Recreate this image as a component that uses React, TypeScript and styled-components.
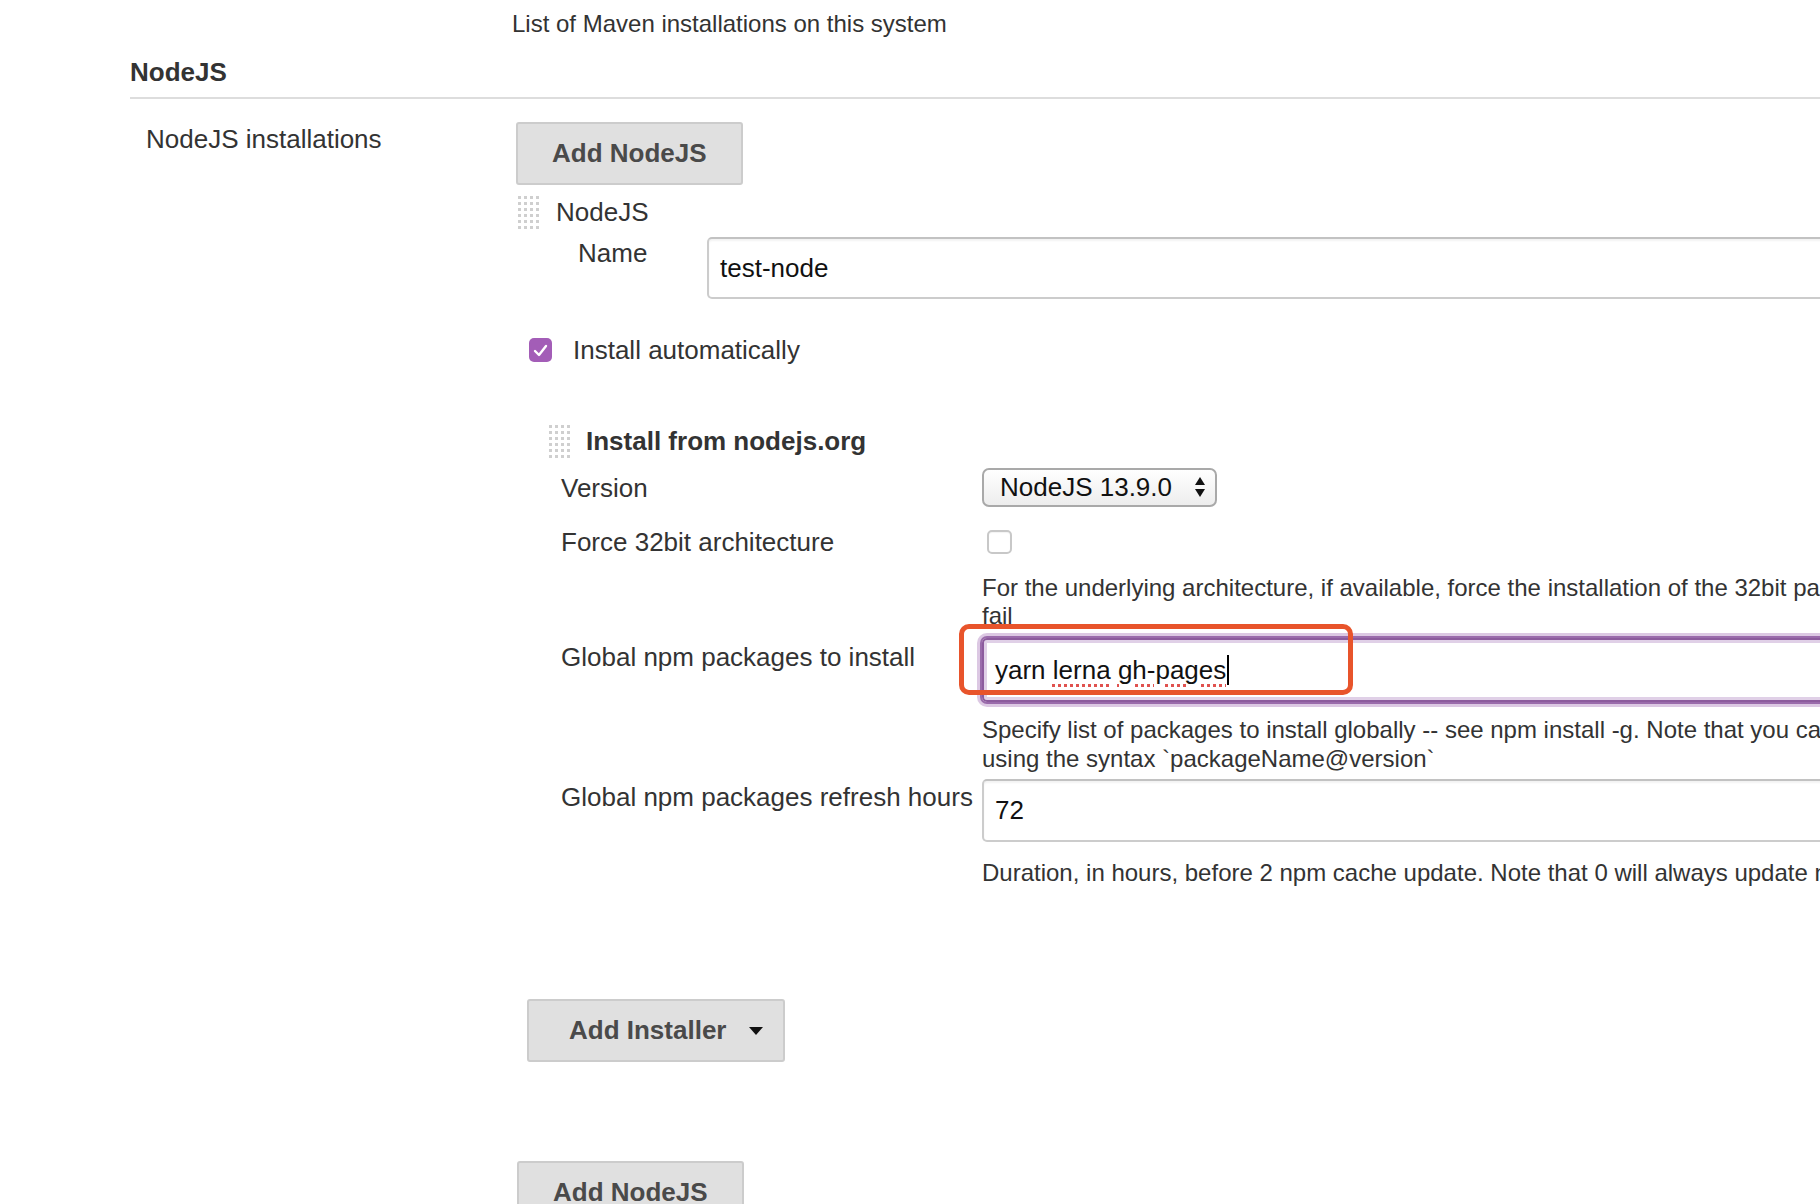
import React from 'react';
import styled, { createGlobalStyle, css } from 'styled-components';

const GlobalStyle = createGlobalStyle`
  html, body {
    margin: 0;
    padding: 0;
    background: #fff;
    overflow: hidden;
  }
  body {
    font-family: "Liberation Sans", Arial, Helvetica, sans-serif;
    font-size: 26px;
    color: #333;
  }
  #root {
    width: 1820px;
    height: 1204px;
    overflow: hidden;
  }
`;

const Page = styled.div`
  padding-left: 130px;
`;

const TopHelp = styled.div`
  padding: 9px 0 0 382px;
  font-size: 24px;
  line-height: 30px;
`;

const SectionHeader = styled.div`
  margin-top: 18px;
  padding-bottom: 10px;
  border-bottom: 2px solid #ddd;
  font-weight: bold;
  line-height: 30px;
`;

const EntryRow = styled.div`
  display: grid;
  grid-template-columns: 386px 1fr;
  padding-top: 23px;
`;

const EntryLabel = styled.div`
  padding: 2px 0 0 16px;
  line-height: 30px;
`;

const Content = styled.div`
  min-width: 0;
`;

const Button = styled.button<{ $offset?: number; $left?: number; $right?: number; $top?: number; $gap?: number }>`
  display: inline-flex;
  align-items: center;
  gap: ${(p) => p.$gap ?? 0}px;
  box-sizing: border-box;
  height: 63px;
  margin: ${(p) => p.$top ?? 0}px 0 0 ${(p) => p.$offset ?? 0}px;
  padding: 0 ${(p) => p.$right ?? 34}px 0 ${(p) => p.$left ?? 34}px;
  background: #e0e0e0;
  border: 2px solid #ccc;
  border-radius: 3px;
  font: bold 26px "Liberation Sans", Arial, sans-serif;
  color: #4a4a4a;
`;

const Chunk = styled.div<{ $top: number }>`
  margin-top: ${(p) => p.$top}px;
`;

const ChunkHead = styled.div<{ $indent: number; $gap: number; $bold?: boolean }>`
  display: flex;
  align-items: center;
  gap: ${(p) => p.$gap}px;
  height: 35px;
  padding-left: ${(p) => p.$indent}px;
  font-weight: ${(p) => (p.$bold ? 'bold' : 'normal')};
`;

const NameRow = styled.div`
  display: flex;
  align-items: flex-start;
  margin-top: 7px;
  padding-left: 62px;
`;

const NameLabel = styled.div`
  width: 129px;
  flex: none;
  padding-top: 1px;
  line-height: 30px;
`;

const Field = styled.div<{ $focused?: boolean; $height?: number }>`
  box-sizing: border-box;
  flex: none;
  width: 1300px;
  height: ${(p) => p.$height ?? 63}px;
  display: flex;
  align-items: center;
  padding: 0 11px;
  border: 2px solid #ccc;
  border-top-color: #c2c2c2;
  border-radius: 5px;
  box-shadow: inset 0 2px 2px rgba(0, 0, 0, 0.05);
  color: #111;
  white-space: pre;
  ${(p) =>
    p.$focused &&
    css`
      border-color: #8c5b9d;
      box-shadow: inset 0 0 0 3px rgba(165, 120, 185, 0.35), 0 0 0 2px #9a6bab,
        0 0 0 5px rgba(185, 145, 200, 0.5);
    `}
`;

const Misspelled = styled.span`
  text-decoration: underline dotted #e0524f;
  text-decoration-thickness: 3px;
  text-underline-offset: 5px;
`;

const Caret = styled.span`
  display: inline-block;
  vertical-align: middle;
  width: 2px;
  height: 30px;
  background: #000;
  margin-left: 1px;
`;

const CheckRow = styled.div`
  display: flex;
  align-items: center;
  gap: 21px;
  margin-top: 36px;
  padding-left: 13px;
  line-height: 30px;
`;

const CheckBox = styled.span<{ $checked?: boolean }>`
  box-sizing: border-box;
  display: inline-flex;
  align-items: center;
  justify-content: center;
  flex: none;
  width: ${(p) => (p.$checked ? 23 : 25)}px;
  height: 24px;
  border-radius: 5px;
  ${(p) =>
    p.$checked
      ? css`
          background: #a35db7;
        `
      : css`
          margin-left: 5px;
          background: #fff;
          border: 2px solid #c8c8c8;
          box-shadow: inset 0 1px 1px rgba(0, 0, 0, 0.05);
        `}
`;

const FieldRow = styled.div<{ $top: number; $center?: boolean }>`
  display: flex;
  align-items: ${(p) => (p.$center ? 'center' : 'flex-start')};
  margin-top: ${(p) => p.$top}px;
  padding-left: 45px;
`;

const FieldLabel = styled.div<{ $pad?: number }>`
  width: 421px;
  flex: none;
  padding-top: ${(p) => p.$pad ?? 0}px;
  line-height: 30px;
  white-space: nowrap;
`;

const Help = styled.div<{ $top: number; $lh: number }>`
  margin: ${(p) => p.$top}px 0 0 466px;
  font-size: 24px;
  line-height: ${(p) => p.$lh}px;
  white-space: nowrap;
`;

const SelectBox = styled.div`
  position: relative;
  box-sizing: border-box;
  width: 235px;
  height: 39px;
  display: flex;
  align-items: center;
  padding-left: 16px;
  border: 2px solid #a9a9a9;
  border-radius: 7px;
  background: linear-gradient(#ffffff, #ededed);
  color: #111;
`;

const SelectArrows = styled.svg`
  position: absolute;
  right: 10px;
  top: 7px;
`;

const Annotated = styled.div`
  position: relative;
  flex: none;
`;

const RedMark = styled.div`
  position: absolute;
  left: -23px;
  top: -14px;
  width: 394px;
  height: 71px;
  box-sizing: border-box;
  border: 5px solid #e8542b;
  border-radius: 10px;
  pointer-events: none;
`;

const Handle = () => (
  <svg width="23" height="35" viewBox="0 0 23 35">
    {[0, 1, 2, 3, 4, 5].map((r) =>
      [0, 1, 2, 3].map((c) => (
        <rect key={`${r}-${c}`} x={1 + c * 6} y={1 + r * 6} width="3" height="3" fill="#cfcfcf" />
      ))
    )}
  </svg>
);

const Check = () => (
  <svg width="15" height="13" viewBox="0 0 15 13">
    <path d="M2 7 L6 11 L13 2" fill="none" stroke="#fff" strokeWidth="2.4" strokeLinecap="round" strokeLinejoin="round" />
  </svg>
);

const DropTriangle = () => (
  <svg width="14" height="8" viewBox="0 0 14 8">
    <path d="M0 0 H14 L7 8 Z" fill="#111" />
  </svg>
);

export default function App() {
  return (
    <>
      <GlobalStyle />
      <Page>
        <TopHelp>List of Maven installations on this system</TopHelp>
        <SectionHeader>NodeJS</SectionHeader>
        <EntryRow>
          <EntryLabel>NodeJS installations</EntryLabel>
          <Content>
            <Button $offset={0}>Add NodeJS</Button>
            <Chunk $top={10}>
              <ChunkHead $indent={1} $gap={16}>
                <Handle />
                <span>NodeJS</span>
              </ChunkHead>
              <NameRow>
                <NameLabel>Name</NameLabel>
                <Field $height={62}>test-node</Field>
              </NameRow>
              <CheckRow>
                <CheckBox $checked>
                  <Check />
                </CheckBox>
                <span>Install automatically</span>
              </CheckRow>
              <Chunk $top={59}>
                <ChunkHead $indent={32} $gap={15} $bold>
                  <Handle />
                  <span>Install from nodejs.org</span>
                </ChunkHead>
                <FieldRow $top={9} $center>
                  <FieldLabel>Version</FieldLabel>
                  <SelectBox>
                    NodeJS 13.9.0
                    <SelectArrows width="10" height="20" viewBox="0 0 10 20">
                      <path d="M5 0 L10 8 H0 Z" fill="#111" />
                      <path d="M0 12 H10 L5 20 Z" fill="#111" />
                    </SelectArrows>
                  </SelectBox>
                </FieldRow>
                <FieldRow $top={20} $center>
                  <FieldLabel>Force 32bit architecture</FieldLabel>
                  <CheckBox />
                </FieldRow>
                <Help $top={17} $lh={28}>
                  For the underlying architecture, if available, force the installation of the 32bit package. Otherwise the build will
                  <br />
                  fail
                </Help>
                <FieldRow $top={8}>
                  <FieldLabel $pad={4}>Global npm packages to install</FieldLabel>
                  <Annotated>
                    <Field $focused $height={64}>
                      <span>
                        yarn <Misspelled>lerna</Misspelled> <Misspelled>gh-pages</Misspelled>
                      </span>
                      <Caret />
                    </Field>
                    <RedMark />
                  </Annotated>
                </FieldRow>
                <Help $top={13} $lh={29}>
                  Specify list of packages to install globally -- see npm install -g. Note that you can specify a package version
                  <br />
                  using the syntax `packageName@version`
                </Help>
                <FieldRow $top={6}>
                  <FieldLabel $pad={3}>Global npm packages refresh hours</FieldLabel>
                  <Field>72</Field>
                </FieldRow>
                <Help $top={16} $lh={29}>
                  Duration, in hours, before 2 npm cache update. Note that 0 will always update npm cache
                </Help>
                <Button $offset={11} $left={40} $right={20} $gap={23} $top={112}>
                  Add Installer
                  <DropTriangle />
                </Button>
              </Chunk>
            </Chunk>
            <Button $offset={1} $top={99}>
              Add NodeJS
            </Button>
          </Content>
        </EntryRow>
      </Page>
    </>
  );
}
